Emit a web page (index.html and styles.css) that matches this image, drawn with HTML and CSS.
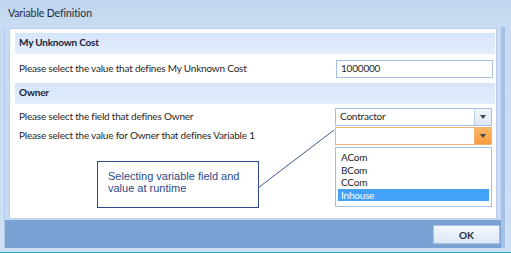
FILE: index.html
```html
<!DOCTYPE html>
<html lang="en">
<head>
  <meta charset="UTF-8">
  <title>Variable Definition</title>
  <link rel="stylesheet" href="styles.css">
</head>
<body>
  <div class="window">
    <div class="titlebar">Variable Definition</div>
    <div class="client">
      <div class="panel">
        <div class="group-head">My Unknown Cost</div>
        <div class="row row-first">
          <span class="label">Please select the value that defines My Unknown Cost</span>
          <div class="textbox">1000000</div>
        </div>
        <div class="group-head">Owner</div>
        <div class="row row-combo">
          <span class="label">Please select the field that defines Owner</span>
          <div class="combo">
            <span class="combo-text">Contractor</span>
            <span class="combo-btn"><i class="arrow"></i></span>
          </div>
        </div>
        <div class="row row-combo2">
          <span class="label">Please select the value for Owner that defines Variable 1</span>
          <div class="combo combo-active">
            <span class="combo-text"></span>
            <span class="combo-btn"><i class="arrow"></i></span>
            <ul class="droplist">
              <li>ACom</li>
              <li>BCom</li>
              <li>CCom</li>
              <li class="selected">Inhouse</li>
            </ul>
          </div>
        </div>
      </div>
      <div class="footer">
        <button class="ok">OK</button>
      </div>
    </div>
    <div class="bottom-edge"></div>

    <!-- annotation -->
    <svg class="pointer" width="511" height="253">
      <line x1="258" y1="188" x2="334" y2="130" stroke="#3b5a94" stroke-width="1" />
    </svg>
    <div class="callout">Selecting variable field and<br>value at runtime</div>
  </div>
</body>
</html>
```

FILE: styles.css
```css
* { box-sizing: border-box; }
body { margin: 0; font-family: Lato, "Open Sans", sans-serif; font-size: 10px; letter-spacing: -0.2px; color: #1f1f1f; }

.window { position: relative; width: 511px; height: 253px; background: linear-gradient(#c7daf1, #cde0f4); overflow: hidden; }
.titlebar { height: 27px; padding: 7px 0 0 8px; font-size: 10.5px; letter-spacing: -0.1px; color: #1c2a3c; background: linear-gradient(#c0d5ee, #c9dcf2); }

.client { margin: 0 6px 0 4px; height: 221px; display: flex; flex-direction: column; background: #c9dbf2; border-left: 1px solid #b1c9e8; border-right: 4px solid #a6c1e5; }
.panel { position: relative; flex: 1; margin: 1px 4px 1px 4px; background: #fff; border: 1px solid #b8cfea; padding: 4px 1px 0 5px; }

.group-head { height: 21px; padding: 3px 0 0 4px; font-weight: bold; color: #17243a; background: linear-gradient(#d5e5fa, #e3eefd); }
.row { display: flex; justify-content: space-between; align-items: center; padding: 0 2px 0 4px; }
.row .label { margin-top: -2px; }
.row-first { height: 29px; }
.row-combo { height: 18px; margin-top: 4px; }
.row-combo2 { height: 18px; margin-top: 1px; }

.textbox, .combo { width: 157px; height: 18px; border: 1px solid #a5c0e4; background: #fff; padding-left: 4px; line-height: 15px; }
.combo { position: relative; display: flex; padding: 0; width: 157px; margin-right: 1px; }
.combo-text { flex: 1; padding-left: 4px; }
.combo-btn { width: 17px; border-left: 1px solid #b9cfea; background: linear-gradient(#eef4fc, #dfe9f7); display: flex; align-items: center; justify-content: center; }
.arrow { width: 0; height: 0; border-left: 3.5px solid transparent; border-right: 3.5px solid transparent; border-top: 4px solid #3c4450; }
.combo-active { border-color: #f6b26e; }
.combo-active .combo-btn { border-left-color: #f6b26e; background: linear-gradient(#fbb766, #f79b3b); }

.droplist { position: absolute; top: 18px; left: -1px; width: 157px; height: 60px; margin: 1px 0 0; padding: 3px 2px; list-style: none; background: #fff; border: 1px solid #a5c0e4; z-index: 2; }
.droplist li { height: 12.5px; line-height: 12px; padding-left: 3px; }
.droplist li.selected { background: #43a1f7; color: #fff; }

.footer { height: 28px; background: #7aa1d4; display: flex; justify-content: flex-end; align-items: flex-start; padding: 5px 1px 0 0; }
.ok { width: 67px; height: 19px; font-family: Lato, sans-serif; font-size: 10px; font-weight: bold; color: #2a2f36; border: 1px solid #a9c2e2; background: linear-gradient(#f3f7fd, #dce8f6); padding: 0; }

.bottom-edge { margin-top: 2px; border-bottom: 3px solid #2cafc4; height: 5px; }

.pointer { position: absolute; left: 0; top: 0; pointer-events: none; }
.callout { position: absolute; left: 97px; top: 161px; width: 162px; height: 47px; border: 1px solid #2d4a86; background: #fff; padding: 8px 0 0 10px; font-family: "Liberation Sans", Arial, sans-serif; font-size: 11px; letter-spacing: 0; line-height: 12px; color: #2c4a8b; }
```
